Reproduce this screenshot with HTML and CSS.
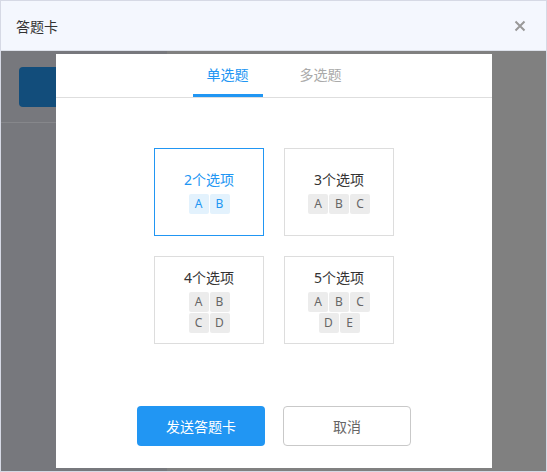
FILE: index.html
```html
<!DOCTYPE html>
<html lang="zh-CN">
<head>
<meta charset="UTF-8">
<meta name="viewport" content="width=device-width, initial-scale=1.0">
<title>答题卡</title>
<link rel="stylesheet" href="styles.css">
</head>
<body>
<div class="window">
  <header class="win-header">
    <span class="win-title">答题卡</span>
    <span class="win-close">
      <svg width="12" height="12" viewBox="0 0 12 12"><path d="M1.5 1.5 L10.5 10.5 M10.5 1.5 L1.5 10.5" stroke="#999" stroke-width="2" fill="none"/></svg>
    </span>
  </header>

  <div class="stage">
    <div class="behind-side">
      <div class="behind-btn"></div>
      <div class="behind-line"></div>
    </div>
    <div class="behind-main"></div>

    <div class="modal">
      <div class="tabs">
        <div class="tab active">单选题</div>
        <div class="tab">多选题</div>
      </div>

      <div class="cards">
        <div class="card selected">
          <div class="card-title">2个选项</div>
          <div class="chip-row"><span class="chip">A</span><span class="chip">B</span></div>
        </div>
        <div class="card">
          <div class="card-title">3个选项</div>
          <div class="chip-row"><span class="chip">A</span><span class="chip">B</span><span class="chip">C</span></div>
        </div>
        <div class="card">
          <div class="card-title">4个选项</div>
          <div class="chip-row"><span class="chip">A</span><span class="chip">B</span></div>
          <div class="chip-row"><span class="chip">C</span><span class="chip">D</span></div>
        </div>
        <div class="card">
          <div class="card-title">5个选项</div>
          <div class="chip-row"><span class="chip">A</span><span class="chip">B</span><span class="chip">C</span></div>
          <div class="chip-row"><span class="chip">D</span><span class="chip">E</span></div>
        </div>
      </div>

      <div class="actions">
        <button class="btn btn-primary">发送答题卡</button>
        <button class="btn btn-default">取消</button>
      </div>
    </div>
  </div>
</div>
</body>
</html>
```

FILE: styles.css
```css
* {
  box-sizing: border-box;
}

body {
  margin: 0;
  padding: 0;
  font-family: 'Noto Sans', 'Noto Sans CJK SC', sans-serif;
  color: #333;
  background-color: #fff;
}

.window {
  width: 547px;
  height: 472px;
  border: 1px solid #d6d9e5;
  display: flex;
  flex-direction: column;
  overflow: hidden;
}

.win-header {
  height: 50px;
  flex: none;
  background-color: #f4f7fe;
  border-bottom: 1px solid #dde1ea;
  display: flex;
  align-items: center;
  justify-content: space-between;
  padding: 0 20px 0 15px;
}

.win-title {
  font-size: 14px;
  color: #333;
}

.win-close {
  display: flex;
  align-items: center;
}

.stage {
  position: relative;
  flex: 1;
  display: flex;
  background-color: #808080;
}

.behind-side {
  width: 166px;
  background-color: #77787d;
  padding-top: 16px;
}

.behind-btn {
  margin-left: 18px;
  width: 80px;
  height: 40px;
  border-radius: 4px;
  background-color: #124d7b;
}

.behind-line {
  margin-top: 15px;
  height: 1px;
  background-color: #86878b;
}

.behind-main {
  flex: 1;
}

/* ventana del dialogo */
.modal {
  position: absolute;
  left: 55px;
  top: 3px;
  width: 436px;
  height: 414px;
  background-color: #fff;
  display: flex;
  flex-direction: column;
  align-items: center;
}

.tabs {
  width: 100%;
  height: 44px;
  border-bottom: 1px solid #dedede;
  display: flex;
  justify-content: center;
  gap: 23px;
}

.tab {
  width: 70px;
  text-align: center;
  font-size: 14px;
  line-height: 20px;
  padding-top: 11px;
  color: #aaa;
}

.tab.active {
  color: #2196f3;
  border-bottom: 3px solid #2196f3;
}

.cards {
  margin-top: 50px;
  display: grid;
  grid-template-columns: 110px 110px;
  grid-auto-rows: 88px;
  gap: 20px;
}

.card {
  border: 1px solid #dddddd;
  display: flex;
  flex-direction: column;
  align-items: center;
  justify-content: center;
  gap: 1px;
}

.card-title {
  font-size: 14px;
  line-height: 20px;
  margin-bottom: 3px;
  color: #333;
}

.chip-row {
  display: flex;
  gap: 1px;
}

.chip {
  width: 20px;
  height: 20px;
  border-radius: 2px;
  background-color: #ececec;
  color: #666;
  font-size: 12px;
  line-height: 20px;
  text-align: center;
}

.card.selected {
  border-color: #2196f3;
}

.card.selected .card-title {
  color: #2196f3;
}

.card.selected .chip {
  background-color: #e3f2fd;
  color: #2196f3;
}

.actions {
  margin-top: 62px;
  display: flex;
  gap: 18px;
}

.btn {
  width: 128px;
  height: 40px;
  border-radius: 4px;
  font-family: 'Noto Sans', 'Noto Sans CJK SC', sans-serif;
  font-size: 14px;
  cursor: pointer;
}

.btn-primary {
  background-color: #2196f3;
  border: none;
  color: #fff;
}

.btn-default {
  background-color: #fff;
  border: 1px solid #c9c9c9;
  color: #666;
}
```
